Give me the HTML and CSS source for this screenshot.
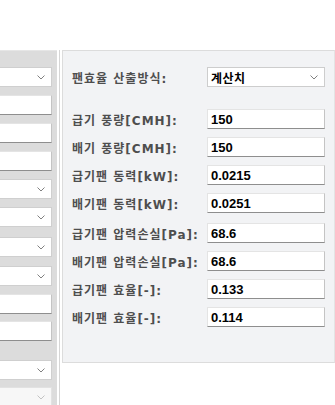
FILE: index.html
```html
<!DOCTYPE html>
<html lang="ko">
<head>
    <meta charset="UTF-8">
    <meta name="viewport" content="width=device-width, initial-scale=1.0">
    <title>팬효율</title>
    <link rel="stylesheet" href="styles.css">
</head>
<body>

    <div class="topbar"></div>

    <div class="main">

        <div class="side">
            <div class="side-panel">
                <div class="field select"><svg class="chev" viewBox="0 0 8 5"><polyline points="0.5,0.5 4,4 7.5,0.5"/></svg></div>
                <div class="field input"></div>
                <div class="field input"></div>
                <div class="field input"></div>
                <div class="field select"><svg class="chev" viewBox="0 0 8 5"><polyline points="0.5,0.5 4,4 7.5,0.5"/></svg></div>
                <div class="field select"><svg class="chev" viewBox="0 0 8 5"><polyline points="0.5,0.5 4,4 7.5,0.5"/></svg></div>
                <div class="field select gap-lg"><svg class="chev" viewBox="0 0 8 5"><polyline points="0.5,0.5 4,4 7.5,0.5"/></svg></div>
                <div class="field select gap-md"><svg class="chev" viewBox="0 0 8 5"><polyline points="0.5,0.5 4,4 7.5,0.5"/></svg></div>
                <div class="field input"></div>
                <div class="field input gap-sm"></div>
                <div class="field select gap-xl"><svg class="chev" viewBox="0 0 8 5"><polyline points="0.5,0.5 4,4 7.5,0.5"/></svg></div>
                <div class="field select disabled gap-sm"><svg class="chev" viewBox="0 0 8 5"><polyline points="0.5,0.5 4,4 7.5,0.5"/></svg></div>
            </div>
        </div>

        <div class="panel">
            <div class="row first">
                <span class="label">팬효율 산출방식:</span>
                <div class="box select"><span class="value">계산치</span><svg class="chev" viewBox="0 0 8 5"><polyline points="0.5,0.5 4,4 7.5,0.5"/></svg></div>
            </div>
            <div class="row spaced">
                <span class="label">급기 풍량[CMH]:</span>
                <div class="box input"><span class="value">150</span></div>
            </div>
            <div class="row">
                <span class="label">배기 풍량[CMH]:</span>
                <div class="box input"><span class="value">150</span></div>
            </div>
            <div class="row">
                <span class="label">급기팬 동력[kW]:</span>
                <div class="box input"><span class="value">0.0215</span></div>
            </div>
            <div class="row">
                <span class="label">배기팬 동력[kW]:</span>
                <div class="box input"><span class="value">0.0251</span></div>
            </div>
            <div class="row wide">
                <span class="label">급기팬 압력손실[Pa]:</span>
                <div class="box input"><span class="value">68.6</span></div>
            </div>
            <div class="row">
                <span class="label">배기팬 압력손실[Pa]:</span>
                <div class="box input"><span class="value">68.6</span></div>
            </div>
            <div class="row">
                <span class="label">급기팬 효율[-]:</span>
                <div class="box input"><span class="value">0.133</span></div>
            </div>
            <div class="row">
                <span class="label">배기팬 효율[-]:</span>
                <div class="box input"><span class="value">0.114</span></div>
            </div>
        </div>

    </div>

</body>
</html>
```

FILE: styles.css
```css
body {
    margin: 0;
    padding: 0;
    background-color: #ffffff;
    font-family: "DejaVu Sans", "Noto Sans CJK KR", sans-serif;
    overflow: hidden;
}

.topbar {
    height: 50px;
}

.main {
    display: flex;
    align-items: flex-start;
    height: 355px;
}

/* left column, cut off by the window edge */
.side {
    width: 59px;
    height: 100%;
    border-right: 1px solid #d6d6d6;
    overflow: hidden;
}

.side-panel {
    width: 57px;
    height: 100%;
    box-sizing: border-box;
    background-color: #dcdcdc;
    border-top: 1px solid #e6e6e6;
    padding-top: 16px;
    display: flex;
    flex-direction: column;
    gap: 8px;
}

.field {
    width: 100px;
    height: 20px;
    margin-left: -48px;
    box-sizing: border-box;
    background-color: #ffffff;
    flex-shrink: 0;
}

.field.select {
    border: 1px solid #cfcfcf;
    display: flex;
    justify-content: flex-end;
    align-items: center;
    padding-right: 6px;
}

.field.input {
    border: 1px solid #e4e4e4;
    border-bottom-color: #8e8e8e;
    border-right-color: #c4c4c4;
}

.field.disabled {
    background-color: #f7f7f7;
    border-color: #e2e2e2;
}

.field.disabled .chev polyline {
    stroke: #c2c2c2;
}

.gap-sm { margin-top: -1px; }
.gap-md { margin-top: 1px; }
.gap-lg { margin-top: 2px; }
.gap-xl { margin-top: 11px; }

.chev {
    width: 8px;
    height: 5px;
    display: block;
}

.chev polyline {
    fill: none;
    stroke: #808080;
    stroke-width: 1;
}

/* right panel */
.panel {
    width: 273px;
    height: 313px;
    margin-left: 2px;
    box-sizing: border-box;
    background-color: #f2f3f5;
    border: 1px solid #dcdcdc;
    border-right-color: #e4e4e4;
    padding: 16px 9px 0 9px;
}

.row {
    display: flex;
    align-items: center;
    height: 20px;
    margin-top: 8px;
}

.row.first {
    margin-top: 0;
}

.row.spaced {
    margin-top: 22px;
}

.row.wide {
    margin-top: 10px;
}

.label {
    width: 135px;
    flex-shrink: 0;
    font-size: 12px;
    font-weight: bold;
    letter-spacing: 1px;
    color: #4e4e4e;
    white-space: nowrap;
}

.box {
    width: 118px;
    height: 20px;
    box-sizing: border-box;
    background-color: #ffffff;
    display: flex;
    align-items: center;
    padding-left: 3px;
}

.box.select {
    border: 1px solid #cdcdcd;
    justify-content: space-between;
    padding-right: 6px;
}

.box.input {
    border: 1px solid #e4e4e4;
    border-bottom-color: #8e8e8e;
    border-right-color: #c4c4c4;
}

.value {
    font-family: "Liberation Sans", "Noto Sans CJK KR", sans-serif;
    font-size: 13px;
    font-weight: bold;
    color: #000000;
}

.box.select .value {
    font-family: "Noto Sans CJK KR", sans-serif;
    font-size: 12px;
    letter-spacing: 0.5px;
}
```
